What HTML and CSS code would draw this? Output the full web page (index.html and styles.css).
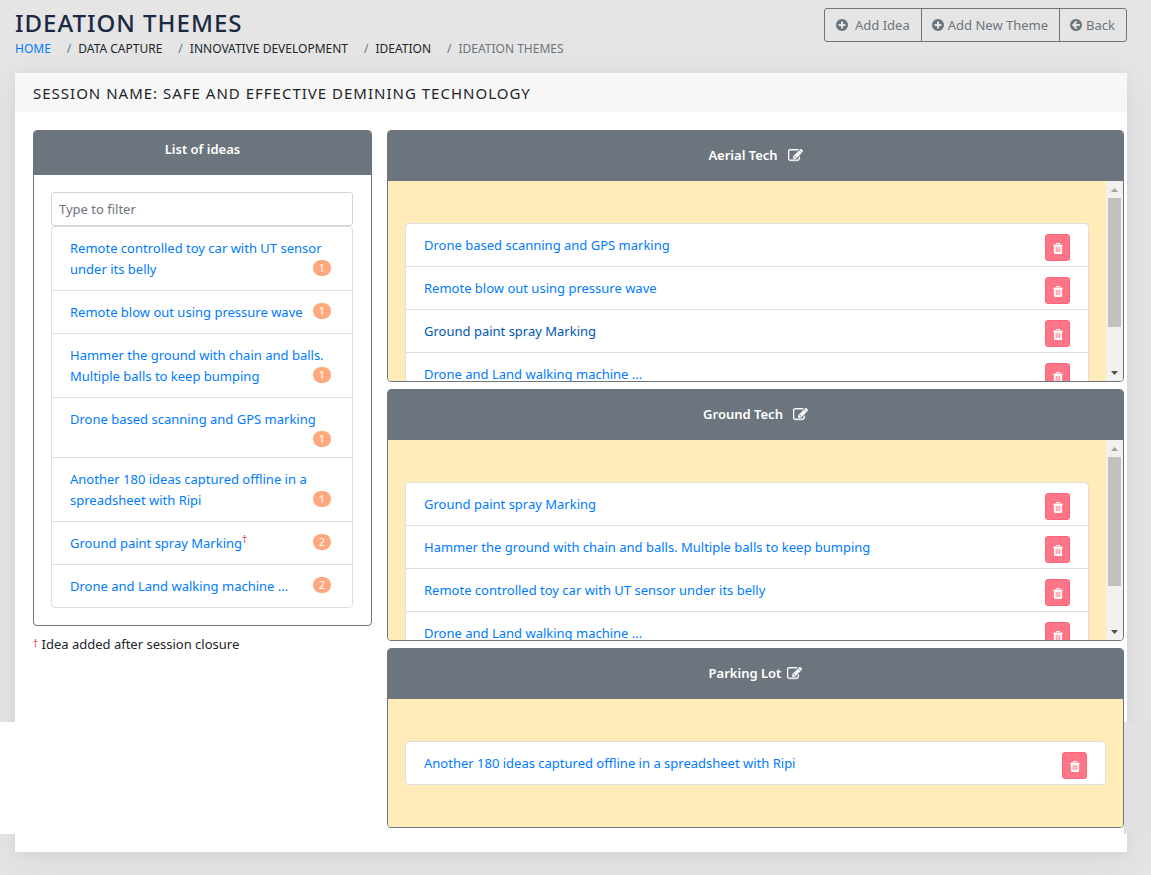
FILE: index.html
```html
<!DOCTYPE html>
<html lang="en">
<head>
<meta charset="utf-8">
<title>Ideation Themes</title>
<link rel="stylesheet" href="styles.css">
</head>
<body>
<svg class="sprite" aria-hidden="true">
  <symbol id="plus" viewBox="0 0 1536 1536"><path d="M1216 832V704q0-26-19-45t-45-19H896V384q0-26-19-45t-45-19H704q-26 0-45 19t-19 45v256H384q-26 0-45 19t-19 45v128q0 26 19 45t45 19h256v256q0 26 19 45t45 19h128q26 0 45-19t19-45V896h256q26 0 45-19t19-45zm320-64q0 209-103 385.500T1153.500 1433 768 1536t-385.500-103T103 1153.500 0 768t103-385.500T382.500 103 768 0t385.500 103T1433 382.500 1536 768z"/></symbol>
  <symbol id="back" viewBox="0 0 1536 1536"><path d="M1280 832V704q0-26-19-45t-45-19H714l189-189q19-19 19-45t-19-45l-91-91q-18-18-45-18t-45 18L360 632l-91 91q-18 18-18 45t18 45l91 91 362 362q18 18 45 18t45-18l91-91q18-18 18-45t-18-45L714 896h502q26 0 45-19t19-45zm256-64q0 209-103 385.500T1153.500 1433 768 1536t-385.500-103T103 1153.500 0 768t103-385.500T382.500 103 768 0t385.500 103T1433 382.500 1536 768z"/></symbol>
  <symbol id="edit" viewBox="0 0 1792 1536"><path d="M888 1056l116-116-152-152-116 116v56h96v96h56zm440-720q-16-16-33 1L945 687q-17 17-1 33t33-1l350-350q17-17 1-33zm80 594v190q0 119-84.500 203.500T1120 1408H288q-119 0-203.500-84.500T0 1120V288Q0 169 84.500 84.500T288 0h832q63 0 117 25 15 7 18 23 3 17-9 29l-49 49q-14 14-32 8-23-6-45-6H288q-66 0-113 47t-47 113v832q0 66 47 113t113 47h832q66 0 113-47t47-113V994q0-13 9-22l64-64q15-15 35-7t20 29zm-96-738l288 288-672 672H640V864zm444 132l-92 92-288-288 92-92q28-28 68-28t68 28l152 152q28 28 28 68t-28 68z"/></symbol>
  <symbol id="trash" viewBox="0 0 1408 1536"><path d="M512 1248V544q0-14-9-23t-23-9h-64q-14 0-23 9t-9 23v704q0 14 9 23t23 9h64q14 0 23-9t9-23zm256 0V544q0-14-9-23t-23-9h-64q-14 0-23 9t-9 23v704q0 14 9 23t23 9h64q14 0 23-9t9-23zm256 0V544q0-14-9-23t-23-9h-64q-14 0-23 9t-9 23v704q0 14 9 23t23 9h64q14 0 23-9t9-23zM480 256h448l-48-117q-7-9-17-11H546q-10 2-17 11zm928 32v64q0 14-9 23t-23 9h-96v948q0 83-47 143.500t-113 60.500H288q-66 0-113-58.500T128 1336V384H32q-14 0-23-9t-9-23v-64q0-14 9-23t23-9h309l70-167q15-37 54-63t79-26h320q40 0 79 26t54 63l70 167h309q14 0 23 9t9 23z"/></symbol>
  <symbol id="up" viewBox="0 0 17 17"><path d="M5 11h7L8.500 7z"/></symbol>
  <symbol id="down" viewBox="0 0 17 17"><path d="M5 7h7l-3.500 4z"/></symbol>
</svg>

<header class="page-header">
  <div>
    <h1>IDEATION THEMES</h1>
    <nav aria-label="Breadcrumb">
      <ol class="breadcrumb">
        <li><a href="#">HOME</a></li>
        <li>DATA CAPTURE</li>
        <li>INNOVATIVE DEVELOPMENT</li>
        <li>IDEATION</li>
        <li class="current">IDEATION THEMES</li>
      </ol>
    </nav>
  </div>
  <div class="actions">
    <button type="button" class="wide"><svg><use href="#plus"/></svg>Add Idea</button>
    <button type="button"><svg><use href="#plus"/></svg>Add New Theme</button>
    <button type="button"><svg><use href="#back"/></svg>Back</button>
  </div>
</header>

<main class="card">
  <h2>SESSION NAME: SAFE AND EFFECTIVE DEMINING TECHNOLOGY</h2>
  <div class="columns">
    <section>
      <div class="panel ideas">
        <h3>List of ideas</h3>
        <div class="ideas-body">
          <input type="text" placeholder="Type to filter" aria-label="Type to filter">
          <ul class="list">
            <li><a href="#">Remote controlled toy car with UT sensor under its belly</a><span class="badge">1</span></li>
            <li><a href="#">Remote blow out using pressure wave</a><span class="badge">1</span></li>
            <li><a href="#">Hammer the ground with chain and balls. Multiple balls to keep bumping</a><span class="badge">1</span></li>
            <li><a href="#">Drone based scanning and GPS marking</a><span class="badge">1</span></li>
            <li><a href="#">Another 180 ideas captured offline in a spreadsheet with Ripi</a><span class="badge">1</span></li>
            <li><a href="#">Ground paint spray Marking<sup>†</sup></a><span class="badge">2</span></li>
            <li><a href="#">Drone and Land walking machine ...</a><span class="badge">2</span></li>
          </ul>
        </div>
      </div>
      <p class="note"><span class="dagger">†</span> Idea added after session closure</p>
    </section>

    <div class="themes">
      <section class="panel">
        <h3>Aerial Tech <button type="button" class="edit" aria-label="Edit Aerial Tech"><svg><use href="#edit"/></svg></button></h3>
        <div class="scroll">
          <div class="drop">
            <ul class="list">
              <li><a href="#">Drone based scanning and GPS marking</a><button type="button" class="delete" aria-label="Delete"><svg><use href="#trash"/></svg></button></li>
              <li><a href="#">Remote blow out using pressure wave</a><button type="button" class="delete" aria-label="Delete"><svg><use href="#trash"/></svg></button></li>
              <li><a href="#" class="hovered">Ground paint spray Marking</a><button type="button" class="delete" aria-label="Delete"><svg><use href="#trash"/></svg></button></li>
              <li><a href="#">Drone and Land walking machine ...</a><button type="button" class="delete" aria-label="Delete"><svg><use href="#trash"/></svg></button></li>
            </ul>
          </div>
          <div class="scrollbar" aria-hidden="true"><svg class="at-end"><use href="#up"/></svg><div class="track"><div class="thumb"></div></div><svg><use href="#down"/></svg></div>
        </div>
      </section>
      <section class="panel">
        <h3>Ground Tech <button type="button" class="edit" aria-label="Edit Ground Tech"><svg><use href="#edit"/></svg></button></h3>
        <div class="scroll">
          <div class="drop">
            <ul class="list">
              <li><a href="#">Ground paint spray Marking</a><button type="button" class="delete" aria-label="Delete"><svg><use href="#trash"/></svg></button></li>
              <li><a href="#">Hammer the ground with chain and balls. Multiple balls to keep bumping</a><button type="button" class="delete" aria-label="Delete"><svg><use href="#trash"/></svg></button></li>
              <li><a href="#">Remote controlled toy car with UT sensor under its belly</a><button type="button" class="delete" aria-label="Delete"><svg><use href="#trash"/></svg></button></li>
              <li><a href="#">Drone and Land walking machine ...</a><button type="button" class="delete" aria-label="Delete"><svg><use href="#trash"/></svg></button></li>
            </ul>
          </div>
          <div class="scrollbar" aria-hidden="true"><svg class="at-end"><use href="#up"/></svg><div class="track"><div class="thumb"></div></div><svg><use href="#down"/></svg></div>
        </div>
      </section>
      <section class="panel">
        <h3 class="tight">Parking Lot <button type="button" class="edit" aria-label="Edit Parking Lot"><svg><use href="#edit"/></svg></button></h3>
        <div class="drop">
          <ul class="list">
            <li><a href="#">Another 180 ideas captured offline in a spreadsheet with Ripi</a><button type="button" class="delete" aria-label="Delete"><svg><use href="#trash"/></svg></button></li>
          </ul>
        </div>
      </section>
    </div>
  </div>
</main>
</body>
</html>
```
FILE: styles.css
```css
* { box-sizing: border-box; }

body {
  margin: 0;
  padding: 8px 24px 23px 15px;
  min-height: 100vh;
  overflow-x: hidden;
  background: #e5e5e5;
  color: #212529;
  font: 13px/21px "Noto Sans", "Open Sans", sans-serif;
}

h1, h2, h3, p, ul, ol { margin: 0; padding: 0; }
ul, ol { list-style: none; }
a { color: #007bff; text-decoration: none; }
button, input { font: inherit; }
svg { fill: currentColor; }
.sprite { display: none; }

.page-header {
  display: flex;
  justify-content: space-between;
  align-items: flex-start;
  margin-bottom: 14px;
}
h1 {
  color: #1b2942;
  font-size: 24px;
  line-height: 30px;
  font-weight: 500;
  letter-spacing: 1px;
}
.breadcrumb {
  display: flex;
  padding-top: 1px;
  font-size: 12px;
  line-height: 20px;
}
.breadcrumb li + li::before {
  content: "/";
  padding: 0 7px 0 16px;
  color: #6c757d;
}
.breadcrumb .current { color: #6c757d; }

.actions { display: flex; }
.actions button {
  display: flex;
  align-items: center;
  gap: 4px;
  height: 34px;
  padding: 0 11px 0 10px;
  border: 1px solid #6c757d;
  background: transparent;
  color: #6c757d;
}
.actions button + button { margin-left: -1px; }
.actions button:first-child { border-radius: 3px 0 0 3px; }
.actions button:last-child { border-radius: 0 3px 3px 0; }
.actions .wide { gap: 7px; padding-left: 11px; }
.actions svg { width: 12px; height: 12px; }

.card {
  position: relative;
  background: #fff;
  box-shadow: 0 10px 40px rgba(62, 57, 107, .07), 0 2px 9px rgba(62, 57, 107, .06);
}
.card::before,
.card::after {
  content: "";
  position: absolute;
  bottom: 18px;
  height: 112px;
}
.card::before { left: -15px; width: 15px; background: #fff; }
.card::after { right: -24px; width: 27px; background: #e1e1e1; }

h2 {
  padding: 10px 18px 9px;
  background: #f7f7f7;
  font-size: 15px;
  line-height: 20px;
  font-weight: 400;
  letter-spacing: 1px;
}
.columns {
  display: grid;
  grid-template-columns: 339fr 737fr;
  gap: 15px;
  padding: 18px 3px 24px 18px;
}

.panel {
  border: 1px solid #6c757d;
  border-radius: 4px;
  overflow: hidden;
}
.panel h3 {
  display: flex;
  justify-content: center;
  gap: 10px;
  padding: 14px 0 15px;
  background: #6c757d;
  color: #fff;
  font-size: 13px;
  line-height: 21px;
  font-weight: 600;
}
.panel h3.tight { gap: 6px; }
.panel.ideas h3 { padding: 8px 0 15px; }
.ideas-body { padding: 17px 18px 17px 17px; }

input {
  display: block;
  width: 100%;
  height: 34px;
  padding: 0 7px;
  border: 1px solid #ced4da;
  border-radius: 3px;
  background: #fff;
}
input::placeholder { color: #6c757d; opacity: 1; }

.list {
  border: 1px solid #dfdfdf;
  border-radius: 4px;
  background: #fff;
}
.list li + li { border-top: 1px solid #dfdfdf; }
.ideas .list li {
  display: flow-root;
  padding: 11px 21px 10px 18px;
}
.badge {
  float: right;
  min-width: 18px;
  margin-top: 1px;
  padding: 0 5px;
  border-radius: 8px;
  background: #ffa87d;
  color: #fff;
  font-size: 11px;
  line-height: 16px;
  text-align: center;
}
sup, .dagger {
  color: #dc3545;
  font-size: 10px;
  line-height: 0;
}
.dagger { vertical-align: 2px; }
.note { padding-top: 8px; }

.themes {
  display: grid;
  gap: 7px;
}
.drop {
  padding: 42px 17px;
  background: #ffecb8;
}
.scroll {
  display: flex;
  height: 200px;
}
.scroll .drop {
  flex: 1;
  overflow-y: auto;
  scrollbar-width: none;
}
.drop li {
  display: flex;
  justify-content: space-between;
  align-items: flex-start;
  padding: 10px 18px 5px;
}
.drop a { line-height: 23px; }
.drop a.hovered { color: #0056b3; }
.edit {
  display: flex;
  align-items: center;
  padding: 0;
  border: 0;
  background: none;
  color: #fff;
}
.edit svg {
  width: 15px;
  height: 13px;
  stroke: currentColor;
  stroke-width: 50px;
}
.delete {
  display: flex;
  align-items: center;
  justify-content: center;
  width: 25px;
  height: 27px;
  padding: 2px 0 0;
  border: 1px solid #ff6578;
  border-radius: 3px;
  background: #ff7588;
  color: #fff;
}
.delete svg { width: 10px; height: 11px; }

.scrollbar {
  display: flex;
  flex-direction: column;
  width: 17px;
  background: #f1f1f1;
  color: #505050;
}
.scrollbar svg { width: 17px; height: 17px; }
.scrollbar .at-end { color: #a3a3a3; }
.track {
  flex: 1;
  padding: 0 2px;
}
.thumb {
  height: 78%;
  background: #c1c1c1;
}
```
